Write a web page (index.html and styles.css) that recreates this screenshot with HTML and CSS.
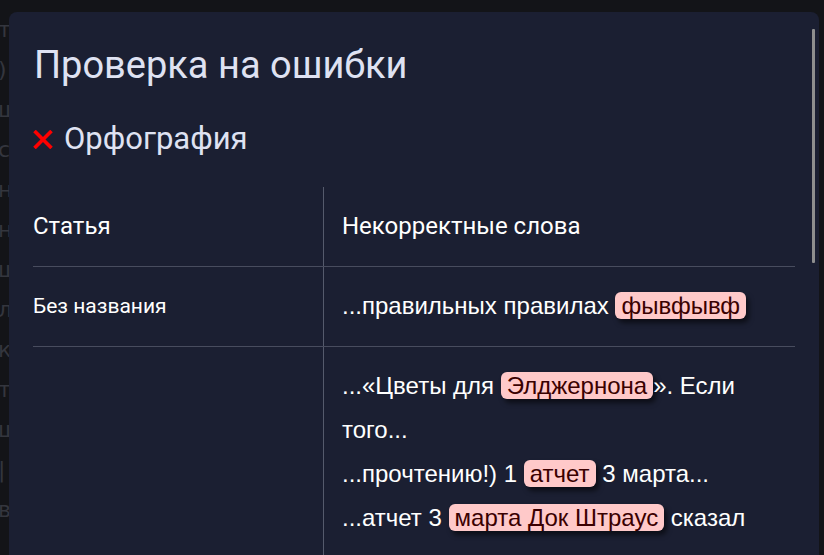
FILE: index.html
```html
<!DOCTYPE html>
<html lang="ru">
<head>
<meta charset="utf-8">
<link rel="stylesheet" href="styles.css">
</head>
<body>
<div class="backdrop">
  <p>тоже проверено тоже проверено тоже проверено</p>
  <p>) текст статьи текст статьи текст статьи</p>
  <p>шаблон шаблон шаблон шаблон шаблон шаблон</p>
  <p>статья статья статья статья статья статья</p>
  <p>название название название название название</p>
  <p>нн название название название название</p>
  <p>шаблон шаблон шаблон шаблон шаблон шаблон</p>
  <p>лист лист лист лист лист лист лист лист</p>
  <p>ксения ксения ксения ксения ксения ксения</p>
  <p>текст текст текст текст текст текст текст</p>
  <p>шаблон шаблон шаблон шаблон шаблон шаблон</p>
  <p>| строка строка строка строка строка строка</p>
  <p>вывод вывод вывод вывод вывод вывод вывод</p>
</div>
<div class="modal">
  <div class="thumb"></div>
  <h1 class="title">Проверка на ошибки</h1>
  <h2 class="section">
    <svg class="xicon" width="20" height="19" viewBox="0 0 20 19"><path d="M1.5 1 L18.5 18 M18.5 1 L1.5 18" stroke="#ff0000" stroke-width="3.6" fill="none"/></svg>
    <span>Орфография</span>
  </h2>
  <table class="errors">
    <thead>
      <tr><th class="c-art">Статья</th><th class="c-words">Некорректные слова</th></tr>
    </thead>
    <tbody>
      <tr>
        <td class="c-art">Без названия</td>
        <td class="c-words"><div class="snip">...правильных правилах <mark class="err">фывфывф</mark></div></td>
      </tr>
      <tr>
        <td class="c-art"></td>
        <td class="c-words">
          <div class="snip">...«Цветы для <mark class="err">Элджернона</mark>». Если того...</div>
          <div class="snip">...прочтению!) 1 <mark class="err">атчет</mark> 3 марта...</div>
          <div class="snip">...атчет 3 <mark class="err">марта Док Штраус</mark> сказал</div>
        </td>
      </tr>
    </tbody>
  </table>
</div>
</body>
</html>
```
FILE: styles.css
```css
html, body {
  margin: 0;
  padding: 0;
  height: 100%;
  overflow: hidden;
}
body {
  background: #131418;
  font-family: Roboto, "Liberation Sans", sans-serif;
}
.backdrop {
  padding: 10px 0 0 0;
  color: #34363e;
  font-family: "DejaVu Sans", sans-serif;
  font-size: 22px;
  line-height: 40px;
}
.backdrop p {
  margin: 0;
  white-space: nowrap;
  text-indent: -2px;
}
.modal {
  position: absolute;
  top: 12px;
  left: 9px;
  width: 810px;
  height: 700px;
  background: #1b1f32;
  border-radius: 8px;
  box-sizing: border-box;
  padding: 25px 24px 0 24px;
}
.thumb {
  position: absolute;
  top: 17px;
  right: 4px;
  width: 3px;
  height: 234px;
  background: #8e8e8e;
  border-radius: 1px;
}
.title {
  margin: 0;
  font-weight: 400;
  font-size: 38px;
  line-height: 56px;
  color: #dfe2f2;
  padding-left: 1px;
}
.section {
  margin: 26px 0 0 0;
  display: flex;
  align-items: center;
  gap: 11px;
  font-weight: 400;
  font-size: 31px;
  line-height: 40px;
  color: #dfe2f2;
}
.xicon {
  display: block;
}
.errors {
  margin-top: 28px;
  width: 762px;
  border-collapse: collapse;
  color: #ffffff;
}
.errors th, .errors td {
  text-align: left;
  vertical-align: middle;
  padding: 17px 0 18px 0;
  border-bottom: 1px solid #484c5e;
}
.errors th {
  font-weight: 400;
  font-size: 24px;
  line-height: 44px;
}
.c-art {
  width: 290px;
  padding-left: 0;
}
.errors td.c-art {
  font-size: 21px;
  line-height: 44px;
}
.c-words {
  border-left: 1px solid #555a6c;
  padding-left: 18px !important;
  padding-right: 20px !important;
}
.errors td.c-words {
  font-family: "Liberation Sans", Arial, sans-serif;
  font-size: 24px;
  line-height: 44px;
}
.err {
  background: #ffc9c9;
  color: #3a0000;
  border-radius: 6px;
  padding: 0 6px;
  box-shadow: 3px 4px 5px rgba(0, 0, 0, 0.55);
}
```
